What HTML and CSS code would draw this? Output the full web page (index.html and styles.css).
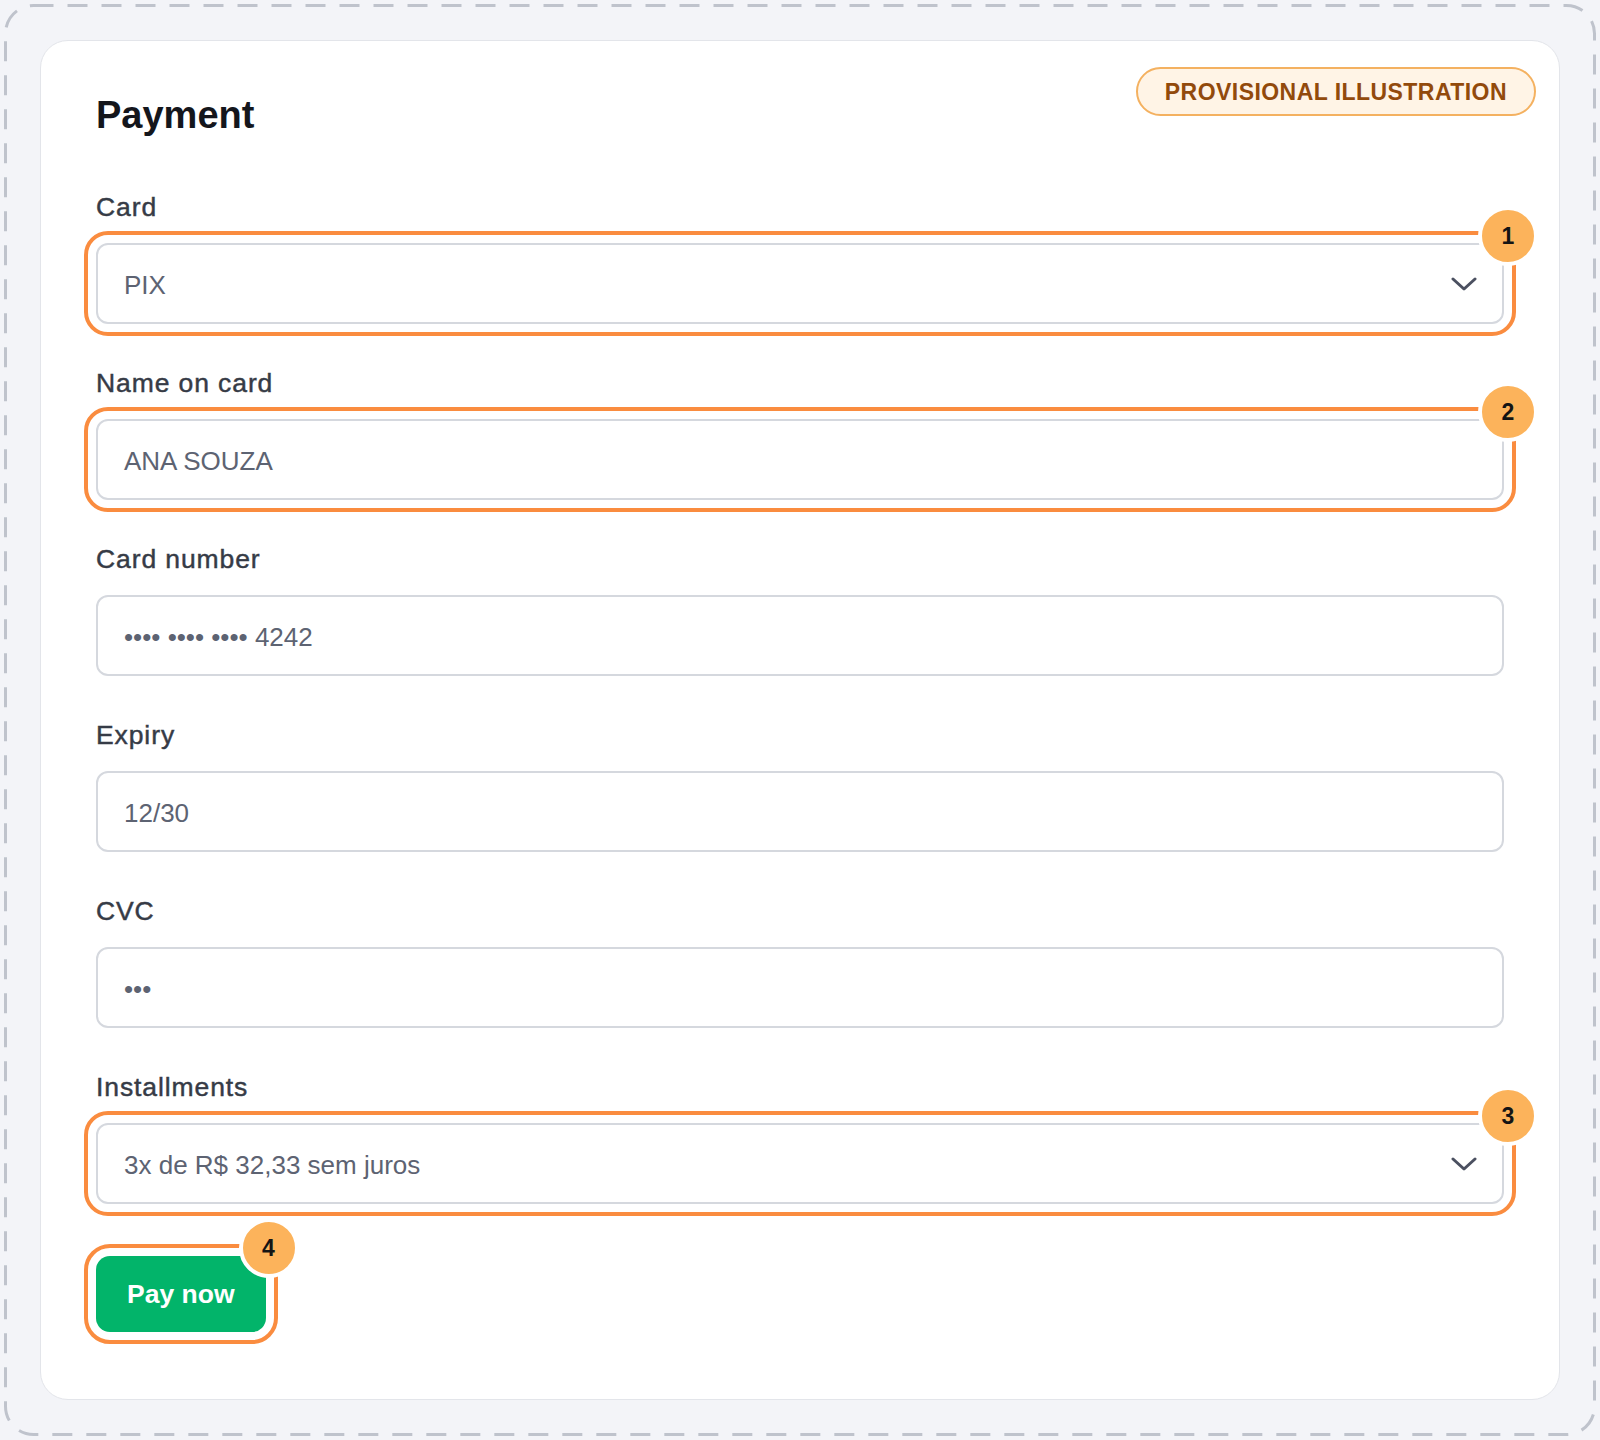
FILE: index.html
```html
<!DOCTYPE html>
<html lang="en">
<head>
<meta charset="utf-8">
<title>Payment</title>
<link rel="stylesheet" href="styles.css">
</head>
<body>
<div class="frame">
  <svg class="frame-dash" width="1600" height="1440" viewBox="0 0 1600 1440" aria-hidden="true">
    <rect x="5.5" y="5.5" width="1589" height="1429" rx="28" ry="28" fill="none" stroke="#bfc3cc" stroke-width="3" stroke-dasharray="20 14"/>
  </svg>
  <div class="card">
    <div class="tag">PROVISIONAL ILLUSTRATION</div>
    <h1 class="title">Payment</h1>
    <div class="fields">
      <div class="field">
        <div class="label">Card</div>
        <div class="control">
          <div class="input select hl"><span>PIX</span>
            <svg class="chev" width="26" height="14" viewBox="0 0 26 14"><path d="M2 2 L13 12 L24 2" fill="none" stroke="#4b5060" stroke-width="3" stroke-linecap="round" stroke-linejoin="round"/></svg>
          </div>
          <span class="num">1</span>
        </div>
      </div>
      <div class="field">
        <div class="label">Name on card</div>
        <div class="control">
          <div class="input hl"><span>ANA SOUZA</span></div>
          <span class="num">2</span>
        </div>
      </div>
      <div class="field">
        <div class="label">Card number</div>
        <div class="control">
          <div class="input"><span>•••• •••• •••• 4242</span></div>
        </div>
      </div>
      <div class="field">
        <div class="label">Expiry</div>
        <div class="control">
          <div class="input"><span>12/30</span></div>
        </div>
      </div>
      <div class="field">
        <div class="label">CVC</div>
        <div class="control">
          <div class="input"><span>•••</span></div>
        </div>
      </div>
      <div class="field">
        <div class="label">Installments</div>
        <div class="control">
          <div class="input select hl"><span>3x de R$ 32,33 sem juros</span>
            <svg class="chev" width="26" height="14" viewBox="0 0 26 14"><path d="M2 2 L13 12 L24 2" fill="none" stroke="#4b5060" stroke-width="3" stroke-linecap="round" stroke-linejoin="round"/></svg>
          </div>
          <span class="num">3</span>
        </div>
      </div>
    </div>
    <div class="actions">
      <div class="control btn-wrap">
        <button class="pay hl" type="button">Pay now</button>
        <span class="num">4</span>
      </div>
    </div>
  </div>
</div>
</body>
</html>
```
FILE: styles.css
```css
* { box-sizing: border-box; }
html, body { margin: 0; padding: 0; }
body {
  background: #f3f4f8;
  font-family: "Liberation Sans", Arial, sans-serif;
  width: 1600px;
  height: 1440px;
  overflow: hidden;
}
.frame {
  position: relative;
  width: 1600px;
  height: 1440px;
  padding: 40px;
}
.frame-dash {
  position: absolute;
  left: 0;
  top: 0;
}
.card {
  position: relative;
  height: 100%;
  background: #ffffff;
  border: 1px solid #e3e5ea;
  border-radius: 28px;
  padding: 52px 55px 0 55px;
}
.tag {
  position: absolute;
  top: 26px;
  right: 23px;
  height: 49px;
  padding: 1px 27px 0 27px;
  border: 2px solid #f4b160;
  border-radius: 25px;
  background: #fff4e6;
  color: #924a0c;
  font-weight: 700;
  font-size: 23px;
  letter-spacing: 0.45px;
  line-height: 44px;
}
.title {
  margin: 0;
  font-size: 38px;
  line-height: 44px;
  font-weight: 700;
  color: #14161c;
}
.fields {
  margin-top: 55px;
  display: flex;
  flex-direction: column;
  gap: 44px;
}
.field {
  display: flex;
  flex-direction: column;
  gap: 21px;
}
.label {
  font-size: 26.5px;
  line-height: 30px;
  color: #363b46;
  letter-spacing: 0.9px;
  -webkit-text-stroke: 0.45px #363b46;
}
.control {
  position: relative;
}
.input {
  height: 81px;
  border: 2px solid #d5d8de;
  border-radius: 12px;
  padding: 3px 25px 0 26px;
  display: flex;
  align-items: center;
  justify-content: space-between;
  font-size: 26px;
  color: #5d6372;
  background: #fff;
}
.chev {
  margin-top: -3px;
}
.hl {
  outline: 4px solid #fa8c3f;
  outline-offset: 8px;
}
.num {
  position: absolute;
  top: -37px;
  right: -34px;
  width: 60px;
  height: 60px;
  border: 4px solid #ffffff;
  border-radius: 50%;
  background: #fcb35b;
  color: #141414;
  font-weight: 700;
  font-size: 23px;
  display: flex;
  align-items: center;
  justify-content: center;
}
.actions {
  margin-top: 52px;
  display: flex;
}
.btn-wrap {
  display: inline-block;
}
.pay {
  display: block;
  height: 76px;
  padding: 0 31px 0 31px;
  border: none;
  border-radius: 14px;
  background: #02b46a;
  color: #ffffff;
  font-family: "Liberation Sans", Arial, sans-serif;
  font-weight: 700;
  font-size: 26.5px;
}
.btn-wrap .num {
  right: -33px;
  top: -38px;
}
```
